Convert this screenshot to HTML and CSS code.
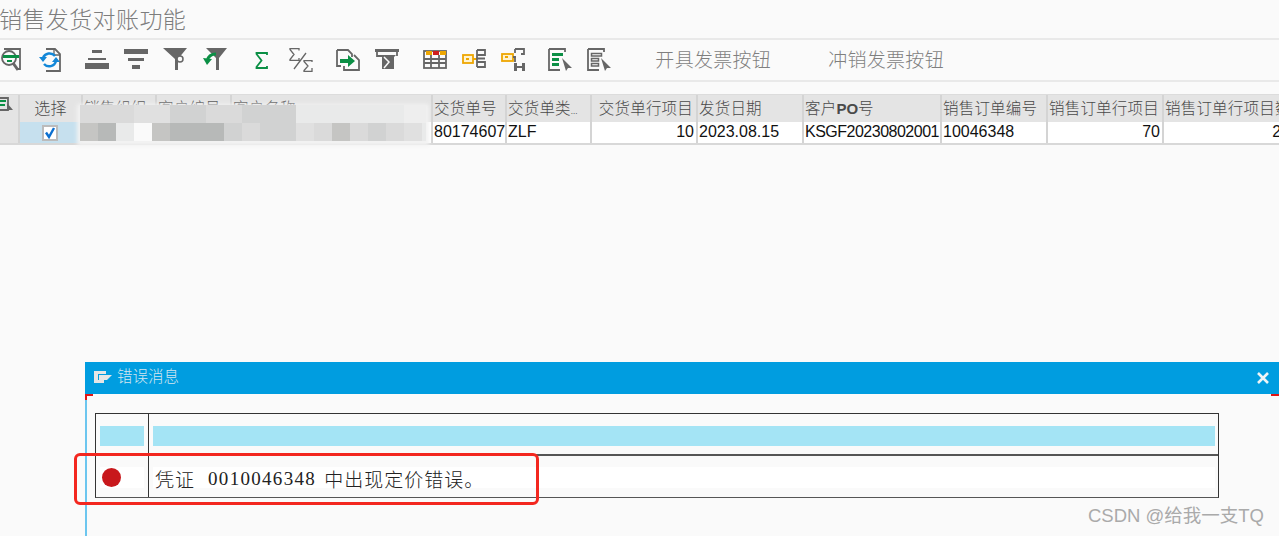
FILE: index.html
```html
<!DOCTYPE html>
<html lang="zh-CN">
<head>
<meta charset="utf-8">
<title>销售发货对账功能</title>
<link rel="stylesheet" href="styles.css">
</head>
<body>
<header class="title">销售发货对账功能</header>
<nav class="toolbar">
  <div class="group">
    <svg class="ico" viewBox="0 0 24 24"><path class="g2" d="M5 1h16v20h-3"/><circle class="g2w" cx="10" cy="10" r="7"/><rect class="green" x="4" y="7" width="16" height="3"/><rect class="green" x="8" y="12" width="5" height="2"/><path class="g3" d="M14 15l5 7"/></svg>
    <svg class="ico" viewBox="0 0 24 24"><path class="g2" d="M8 1h9l5 5v17H8"/><path class="g1" d="M16 1v6h6"/><path class="blue" d="M5 10a7 7 0 0 1 12-2M18 13a7 7 0 0 1-12 3"/><path class="bluef" d="M1 9h8l-4 5zM14 14h8l-4-5z"/></svg>
  </div>
  <div class="group">
    <svg class="ico" viewBox="0 0 24 24"><rect class="fill" x="7" y="2" width="10" height="3"/><rect class="fill" x="3" y="10" width="18" height="2"/><rect class="fill" x="0" y="15" width="24" height="6"/></svg>
    <svg class="ico" viewBox="0 0 24 24"><rect class="fill" x="0" y="1" width="24" height="5"/><rect class="fill" x="4" y="10" width="16" height="3"/><rect class="fill" x="8" y="17" width="8" height="4"/></svg>
    <svg class="ico" viewBox="0 0 24 24"><path class="fill" d="M0 0h24l-9 11v11h-3V11z"/><circle class="g1w" cx="17" cy="11" r="3"/></svg>
    <svg class="ico" viewBox="0 0 24 24"><path class="fill" d="M4 0h21l-8 10v12h-3V10z"/><path class="greens" d="M14 6C9 6 6 9 5 13"/><path class="greenf" d="M1 10l4 7 5-6z"/></svg>
  </div>
  <div class="group">
    <svg class="ico" viewBox="0 0 24 24"><path class="sig" d="M17 7V5H6.500v1l5 6.500-5 6.500v1H17v-2"/></svg>
    <svg class="ico" viewBox="0 0 24 24"><path class="g1" d="M10 2.500V0.700H1v.8l4 5-4 5v.8h9V10M23 14v-1.300h-8v.8l4 4.500-4 4.500v.8h8V20M5 21L17 5"/></svg>
  </div>
  <div class="group">
    <svg class="ico" viewBox="0 0 24 24"><path class="g2" d="M1 2h11l4 4v3M1 2v16h4M18 7l5 5v10H8v-4"/><path class="greenf" d="M4 11h8V7l7 6-7 6v-4H4z"/></svg>
    <svg class="ico" viewBox="0 0 24 24"><rect class="fill" x="0" y="1" width="24" height="3"/><path class="g2" d="M2 4v4h6M22 4v4"/><path class="fill" d="M7 7h14l-2 2v12H7z"/><path class="wh" d="M9 9l5 5-5 6"/></svg>
  </div>
  <div class="group">
    <svg class="ico" viewBox="0 0 24 24"><rect class="g2" x="1" y="3" width="22" height="17"/><rect class="orange" x="3" y="3" width="6" height="4"/><rect class="red" x="10" y="3" width="6" height="4"/><rect class="orange" x="17" y="3" width="6" height="4"/><path class="g2" d="M1 11h22M1 15h22M8 7v13M16 7v13"/></svg>
    <svg class="ico" viewBox="0 0 24 24"><rect class="keyb" x="1" y="7" width="10" height="8"/><rect class="orange" x="4" y="10" width="3" height="2"/><path class="keyl" d="M11 11h4"/><path class="g2" d="M15 2h8v5h-8M15 2v17M15 10.500h8M15 14h8v5h-8"/></svg>
    <svg class="ico" viewBox="0 0 24 24"><rect class="keyb" x="1" y="6" width="11" height="7"/><rect class="orange" x="4" y="8" width="3" height="2"/><path class="g2" d="M14 1h9v5h-3M14 1v4M15 9h-3M14 9v5"/><path class="fill" d="M13 15h11v8H13z"/><rect class="whf" x="16" y="15" width="5" height="3"/><rect class="whf" x="16" y="20" width="5" height="3"/></svg>
  </div>
  <div class="group">
    <svg class="ico" viewBox="0 0 24 24"><path class="g2" d="M1 1h16v3M1 1v21h11"/><rect class="green" x="4" y="5" width="11" height="3"/><rect class="green" x="4" y="10" width="7" height="3"/><rect class="green" x="4" y="15" width="7" height="3"/><path class="fill" d="M14 10l10 10-4 0-2 3z"/></svg>
    <svg class="ico" viewBox="0 0 24 24"><path class="g2" d="M1 1h16v3M1 1v21h11"/><rect class="hollow" x="4.500" y="5.500" width="10" height="2.500"/><rect class="hollow" x="4.500" y="10.500" width="7" height="2.500"/><rect class="hollow" x="4.500" y="15.500" width="7" height="2.500"/><path class="fill" d="M14 10l10 10-4 0-2 3z"/></svg>
  </div>
  <button class="tbtn one">开具发票按钮</button>
  <button class="tbtn">冲销发票按钮</button>
</nav>

<section class="grid">
  <div class="row head">
    <div class="c"><svg class="hico" viewBox="0 0 16 16"><path class="g2" d="M0 2h9v12H0"/><rect class="green" x="1" y="4" width="6" height="2"/><rect class="green" x="1" y="8" width="5" height="2"/><path class="fill" d="M8 7l6 7h-6z"/></svg></div>
    <div class="c ctr">选择</div>
    <div class="c">销售组织</div>
    <div class="c">客户编号</div>
    <div class="c">客户名称</div>
    <div class="c">交货单号</div>
    <div class="c">交货单类<span class="more">...</span></div>
    <div class="c end">交货单行项目</div>
    <div class="c">发货日期</div>
    <div class="c">客户<b class="latin">PO</b>号</div>
    <div class="c">销售订单编号</div>
    <div class="c">销售订单行项目</div>
    <div class="c">销售订单行项目数量</div>
  </div>
  <div class="row body">
    <div class="c mark"></div>
    <div class="c sel"><svg class="chk" viewBox="0 0 16 16"><rect class="box" x="1" y="1" width="14" height="14"/><path class="tick" d="M4 7.500l3 4.500 5-9"/></svg></div>
    <div class="c"></div>
    <div class="c"></div>
    <div class="c"></div>
    <div class="c">80174607</div>
    <div class="c">ZLF</div>
    <div class="c end">10</div>
    <div class="c">2023.08.15</div>
    <div class="c tight">KSGF20230802001</div>
    <div class="c">10046348</div>
    <div class="c end">70</div>
    <div class="c end">20</div>
  </div>
</section>

<div class="mosaic">
  <i class="s3"></i><i class="s3"></i><i class="s3"></i><i class="s4"></i><i class="s4"></i><i class="s2"></i><i class="s2"></i><i class="s3"></i><i class="s3"></i><i class="s2"></i><i class="s2"></i><i class="s2"></i><i class="s5"></i><i class="s5"></i><i class="s5"></i><i class="s5"></i><i class="s5"></i><i class="s5"></i><i class="s6"></i><i class="s6"></i>
  <i class="s1"></i><i class="s0"></i><i class="s5"></i><i class="s7"></i><i class="s1"></i><i class="s0"></i><i class="s0"></i><i class="s0"></i><i class="s2"></i><i class="s3"></i><i class="s2"></i><i class="s2"></i><i class="s4"></i><i class="s3"></i><i class="s1"></i><i class="s3"></i><i class="s2"></i><i class="s3"></i><i class="s4"></i><i class="s5"></i>
</div>

<section class="dialog">
  <div class="dbar">
    <svg class="dico" viewBox="0 0 20 14"><path class="dpath" d="M1 1h12v3H5v6h6v3H1z"/><path class="dfill" d="M6 5h13l-5 5H6z"/></svg>
    <span class="dtitle">错误消息</span>
    <svg class="close" viewBox="0 0 14 14"><path class="x" d="M2 2l10 10M12 2L2 12"/></svg>
  </div>
  <span class="corner left"></span>
  <span class="corner right"></span>
  <div class="msg">
    <div class="mrow top">
      <div class="mc first"><span class="band"></span></div>
      <div class="mc"><span class="band"></span></div>
    </div>
    <div class="mrow bottom">
      <div class="mc first"><span class="wband"><span class="dot"></span></span></div>
      <div class="mc"><span class="wband text">凭证<span class="mono"> 0010046348 </span>中出现定价错误。</span></div>
    </div>
  </div>
</section>
<div class="annot"></div>
<div class="wm">CSDN @给我一支TQ</div>
</body>
</html>
```
FILE: styles.css
```css
* { box-sizing: border-box; }
html, body { margin: 0; height: 536px; overflow: hidden; }
body {
  position: relative;
  background: #fafafa;
  font-family: "Noto Sans CJK SC", sans-serif;
  color: #222;
}
.title {
  height: 40px;
  border-bottom: 2px solid #e9e9e9;
  font-size: 23px;
  line-height: 36px;
  letter-spacing: .4px;
  text-indent: -1px;
  color: #7d7d7d;
  font-weight: 300;
  white-space: nowrap;
}
.toolbar {
  height: 42px;
  border-bottom: 2px solid #e9e9e9;
  display: flex;
  align-items: flex-start;
  padding-top: 8px;
  margin-left: -1px;
}
.group { display: flex; gap: 15px; margin-right: 23.400px; }
.ico { width: 24px; height: 24px; flex: none; overflow: visible; }
.tbtn {
  border: 0;
  background: none;
  padding: 0;
  font: 300 19px/22px "Noto Sans CJK SC", sans-serif;
  letter-spacing: .3px;
  color: #7f7f7f;
  margin-left: 57px;
  white-space: nowrap;
}
.tbtn.one { margin-left: 21px; }
.g1, .g2, .g3, .g1w, .hollow { fill: none; stroke: #666; }
.g1 { stroke-width: 1.300; }
.g2 { stroke-width: 1.800; fill: none; }
.g2w { fill: #fafafa; stroke: #666; stroke-width: 1.800; }
.g3 { stroke-width: 3; }
.g1w { stroke-width: 1.500; fill: #fafafa; }
.hollow { stroke-width: 1.500; }
.fill { fill: #666; }
.green, .greenf { fill: #0b8f45; }
.greens { fill: none; stroke: #0b8f45; stroke-width: 3; }
.sig { fill: none; stroke: #0b8f45; stroke-width: 1.800; }
.blue { fill: none; stroke: #1287d8; stroke-width: 2.500; }
.bluef { fill: #1287d8; }
.wh { fill: none; stroke: #fafafa; stroke-width: 1.500; }
.whf { fill: #fafafa; }
.orange { fill: #eea600; }
.red { fill: #d01f1f; }
.keyb { fill: #fff3cf; stroke: #eea600; stroke-width: 1.800; }
.keyl { fill: none; stroke: #eea600; stroke-width: 2; }

.grid { margin-top: 12px; overflow: hidden; }
.row {
  display: grid;
  grid-template-columns: 20px 63px 74px 75px 201px 74px 85px 106px 106px 138px 106px 116px 130px;
}
.head { height: 28px; background: #e4e4e4; border-top: 1px solid #dcdcdc; }
.body { height: 23px; background: #fff; border-bottom: 2px solid #d8d8d8; }
.c {
  border-right: 2px solid #d4d4d4;
  padding: 0 3px 0 1px;
  overflow: hidden;
  white-space: nowrap;
}
.head .c {
  font-size: 15.500px;
  font-weight: 300;
  line-height: 24px;
  color: #4a4a4a;
  letter-spacing: .2px;
}
.head .c.ctr { text-align: center; font-size: 16px; padding-left: 3px; }
.head .c.end, .body .c.end { text-align: right; }
.latin { font: 700 15px "Liberation Sans", sans-serif; letter-spacing: 0; }
.more { font-size: 9px; letter-spacing: 0; }
.hico { width: 16px; height: 16px; margin: 1px 0 0 -2px; display: block; }
.body .c {
  font: 16px/20px "Liberation Sans", sans-serif;
  color: #111;
  padding: 0 2px 0 1px;
}
.body .tight { letter-spacing: -.5px; }
.mark { background: #e4e4e4; }
.body .sel { background: #c6e0ee; display: flex; justify-content: center; padding-top: 3px; }
.chk { width: 16px; height: 16px; }
.box { fill: #fff; stroke: #bbb; stroke-width: 2; }
.tick { fill: none; stroke: #0a6fd0; stroke-width: 2.400; }

.mosaic {
  position: absolute;
  left: 80px; top: 105px;
  width: 346px; height: 36px;
  display: grid;
  grid-template-columns: repeat(20, 18px);
  grid-auto-rows: 18px;
  background: #f2f2f2;
  box-shadow: 0 2px 4px 3px #f2f2f2;
  overflow: hidden;
}
.mosaic i { display: block; }
.s0 { background: #b7b9b8; }
.s1 { background: #c5c5c3; }
.s2 { background: #d1d2d2; }
.s3 { background: #dadada; }
.s4 { background: #e0e0e0; }
.s5 { background: #e9eaea; }
.s6 { background: #eeeeee; }
.s7 { background: #fafafa; }

.dialog {
  position: absolute;
  left: 85px; top: 362px;
  width: 1194px; height: 174px;
  border-left: 2px solid #6cc6ef;
}
.dbar {
  height: 32px;
  background: #009de0;
  display: flex;
  align-items: center;
  padding-left: 8px;
  margin-left: -2px;
}
.dico { width: 20px; height: 14px; margin-right: 4px; margin-bottom: 2px; }
.dpath { fill: #e6e6e6; fill-rule: evenodd; }
.dfill { fill: #e6e6e6; }
.dtitle { font-size: 15.500px; font-weight: 300; color: #d5e6ef; line-height: 24px; padding-bottom: 6px; }
.close { width: 14px; height: 14px; margin-left: auto; margin-right: 9px; }
.x { fill: none; stroke: #eef4f6; stroke-width: 2.600; }
.corner { position: absolute; top: 32px; width: 8px; height: 6px; border-top: 2px solid #e01515; }
.corner.left { left: -2px; border-left: 2px solid #e01515; }
.corner.right { right: 0; }
.msg {
  margin: 19px 0 0 8px;
  width: 1124px;
  border: 1px solid #333;
  border-bottom-color: #555;
}
.mrow { display: grid; grid-template-columns: 53px 1fr; }
.mrow.top { height: 42px; border-bottom: 2px solid #555; }
.mrow.bottom { height: 41px; }
.mc { padding: 12px 3px 0 4px; }
.mrow.bottom .mc { padding-top: 11px; }
.mc.first { border-right: 1px solid #333; padding-right: 4px; }
.band { display: block; height: 20px; background: #a4e4f5; }
.wband { display: flex; align-items: center; height: 21px; background: #fff; }
.dot { width: 19px; height: 19px; margin-left: 2px; border-radius: 50%; background: #c8181c; }
.text { font-size: 19px; font-weight: 300; letter-spacing: 1px; color: #222; white-space: pre; padding: 2px 0 0 2px; }
.mono { font: 19px "Liberation Serif", serif; letter-spacing: 1.300px; padding: 0 2px 0 7px; }
.annot {
  position: absolute;
  left: 74px; top: 453px;
  width: 465px; height: 52px;
  border: 3px solid #f3271f;
  border-radius: 6px;
}
.wm {
  position: absolute;
  right: 15px; top: 503px;
  font: 18.500px/26px "Liberation Sans", "Noto Sans CJK SC", sans-serif;
  color: #aaa;
  white-space: nowrap;
}
```
